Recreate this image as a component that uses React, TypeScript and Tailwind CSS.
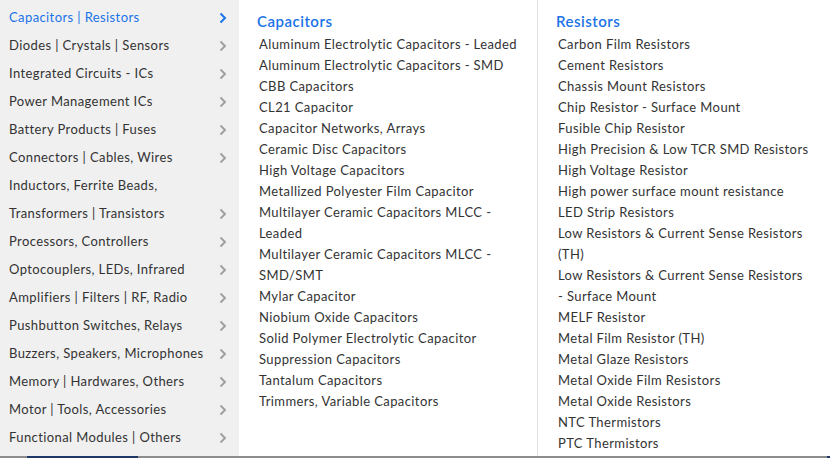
const categories = [
  { name: 'Capacitors | Resistors', arrow: true },
  { name: 'Diodes | Crystals | Sensors', arrow: true },
  { name: 'Integrated Circuits - ICs', arrow: true },
  { name: 'Power Management ICs', arrow: true },
  { name: 'Battery Products | Fuses', arrow: true },
  { name: 'Connectors | Cables, Wires', arrow: true },
  { name: 'Inductors, Ferrite Beads,', arrow: false },
  { name: 'Transformers | Transistors', arrow: true },
  { name: 'Processors, Controllers', arrow: true },
  { name: 'Optocouplers, LEDs, Infrared', arrow: true },
  { name: 'Amplifiers | Filters | RF, Radio', arrow: true },
  { name: 'Pushbutton Switches, Relays', arrow: true },
  { name: 'Buzzers, Speakers, Microphones', arrow: true },
  { name: 'Memory | Hardwares, Others', arrow: true },
  { name: 'Motor | Tools, Accessories', arrow: true },
  { name: 'Functional Modules | Others', arrow: true },
]

const capacitors = [
  ['Aluminum Electrolytic Capacitors - Leaded'],
  ['Aluminum Electrolytic Capacitors - SMD'],
  ['CBB Capacitors'],
  ['CL21 Capacitor'],
  ['Capacitor Networks, Arrays'],
  ['Ceramic Disc Capacitors'],
  ['High Voltage Capacitors'],
  ['Metallized Polyester Film Capacitor'],
  ['Multilayer Ceramic Capacitors MLCC -', 'Leaded'],
  ['Multilayer Ceramic Capacitors MLCC -', 'SMD/SMT'],
  ['Mylar Capacitor'],
  ['Niobium Oxide Capacitors'],
  ['Solid Polymer Electrolytic Capacitor'],
  ['Suppression Capacitors'],
  ['Tantalum Capacitors'],
  ['Trimmers, Variable Capacitors'],
]

const resistors = [
  ['Carbon Film Resistors'],
  ['Cement Resistors'],
  ['Chassis Mount Resistors'],
  ['Chip Resistor - Surface Mount'],
  ['Fusible Chip Resistor'],
  ['High Precision & Low TCR SMD Resistors'],
  ['High Voltage Resistor'],
  ['High power surface mount resistance'],
  ['LED Strip Resistors'],
  ['Low Resistors & Current Sense Resistors', '(TH)'],
  ['Low Resistors & Current Sense Resistors', '- Surface Mount'],
  ['MELF Resistor'],
  ['Metal Film Resistor (TH)'],
  ['Metal Glaze Resistors'],
  ['Metal Oxide Film Resistors'],
  ['Metal Oxide Resistors'],
  ['NTC Thermistors'],
  ['PTC Thermistors'],
]

function Chevron({ active }: { active: boolean }) {
  return (
    <svg width="8" height="12" viewBox="0 0 8 12" className={active ? 'text-[#1a73e8]' : 'text-[#a0a0a0]'}>
      <polyline points="1.5,1.5 6,6 1.5,10.5" fill="none" stroke="currentColor" strokeWidth="2" />
    </svg>
  )
}

function Column({ title, items }: { title: string; items: string[][] }) {
  return (
    <div className="pl-[18px] pt-[11px]">
      <div className="text-[15px] leading-[20px] font-semibold tracking-[0.5px] text-[#1a73e8] mb-[3px]">{title}</div>
      <ul className="pl-[2px]">
        {items.map((lines, i) => (
          <li key={i} className="text-[13px] leading-[21px] tracking-[0.4px] text-[#333]">
            {lines.map((l, j) => (
              <div key={j}>{l}</div>
            ))}
          </li>
        ))}
      </ul>
    </div>
  )
}

export default function App() {
  return (
    <div className="w-[830px] h-[458px] bg-white overflow-hidden flex flex-col" style={{ fontFamily: 'Lato, "Noto Sans", sans-serif' }}>
      <div className="flex h-[456px]">
        {/* Category sidebar */}
        <div className="w-[239px] shrink-0 bg-[#f0f0f0] pt-[4px]">
          {categories.map((c, i) => {
            const active = i === 0
            return (
              <div key={c.name} className="h-[28px] flex items-center justify-between pl-[9px] pr-[12px]">
                <span className={`text-[13px] tracking-[0.4px] ${active ? 'text-[#1a73e8]' : 'text-[#333]'}`}>{c.name}</span>
                {c.arrow && <Chevron active={active} />}
              </div>
            )
          })}
        </div>

        {/* Subcategories */}
        <div className="w-[299px] shrink-0 border-r border-[#e2e2e2]">
          <Column title="Capacitors" items={capacitors} />
        </div>
        <div className="flex-1">
          <Column title="Resistors" items={resistors} />
        </div>
      </div>

      {/* Bottom edge */}
      <div className="h-[2px] flex bg-[#8c8c8c]">
        <div className="w-[27px]" />
        <div className="w-[111px] bg-[#1d3766]" />
        <div className="flex-1" />
        <div className="w-[3px] bg-[#1d3766]" />
      </div>
    </div>
  )
}
